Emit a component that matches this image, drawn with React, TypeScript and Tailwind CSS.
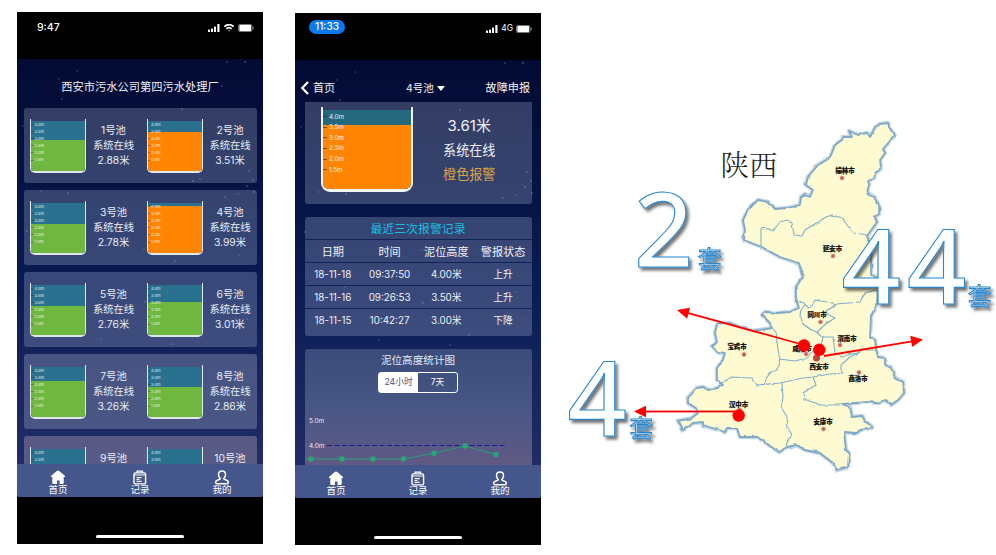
import React from "react";

const FONT = "font-['Inter','Noto_Sans_CJK_SC',sans-serif]";

/* ---------- status bar ---------- */

function Signal() {
  return (
    <svg width="12" height="8" viewBox="0 0 12 8" fill="#fff">
      <rect x="0" y="5.5" width="2" height="2.5" rx=".5" />
      <rect x="3" y="4.5" width="2" height="3.5" rx=".5" />
      <rect x="6" y="2.5" width="2" height="5.5" rx=".5" />
      <rect x="9.3" y="0" width="2.2" height="8" rx=".5" />
    </svg>
  );
}

function Wifi() {
  return (
    <svg width="10" height="8" viewBox="0 0 10 8" fill="none" stroke="#fff" strokeWidth="1.7">
      <path d="M.5 2.8C3-.2 7-.2 9.5 2.8" />
      <path d="M2.4 4.9C4 3.2 6 3.2 7.6 4.9" />
      <path d="M4 6.2h2L5 7.4z" fill="#fff" stroke="none" />
    </svg>
  );
}

function Battery() {
  return (
    <svg width="16" height="8" viewBox="0 0 16 8">
      <rect x=".4" y=".4" width="13.6" height="7.2" rx="1.8" fill="none" stroke="#aaa" strokeWidth=".8" />
      <rect x="1.300" y="1.100" width="11.800" height="5.800" rx="1" fill="#fff" />
      <rect x="14.700" y="2.600" width="1" height="2.800" rx=".5" fill="#888" />
    </svg>
  );
}

/* ---------- tab bar ---------- */

function HomeIcon() {
  return (
    <svg width="16" height="15" viewBox="0 0 16 15" fill="#fff">
      <path d="M8 .6c.5 0 .9.2 1.300.5l5.500 4.600c.6.6.3 1.400-.5 1.400h-.6v5.600c0 .8-.5 1.400-1.400 1.400H9.600V10.500H7v3.600H3.700c-.9 0-1.400-.6-1.400-1.400V7.100h-.6c-.8 0-1.100-.8-.5-1.400l5.500-4.600C7.100.8 7.500.6 8 .6z" />
    </svg>
  );
}

function RecordIcon() {
  return (
    <svg width="16" height="15" viewBox="0 0 16 15" fill="none" stroke="#fff" strokeWidth="1.400">
      <rect x="2" y="2.900" width="11.600" height="11" rx="1.500" />
      <path d="M2 5h11.600M5 2.800V1.200h5.500v1.600M4.600 7.700h5M4.600 9.500h2.800M4.600 11.300h5" strokeWidth="1.200" />
    </svg>
  );
}

function UserIcon() {
  return (
    <svg width="16" height="15" viewBox="0 0 16 15" fill="none" stroke="#fff" strokeWidth="1.500">
      <path d="M8 1C5.700 1 4.500 2.600 4.500 4.600c0 1.900.7 3 1.800 4-.3 1.300-4.600 1-4.600 3.600 0 1 .6 1.600 1.600 1.600h9.400c1 0 1.600-.6 1.600-1.600 0-2.600-4.300-2.300-4.600-3.600 1.100-1 1.800-2.100 1.800-4C11.500 2.600 10.300 1 8 1z" />
    </svg>
  );
}

const TABS = [
  { label: "首页", Icon: HomeIcon },
  { label: "记录", Icon: RecordIcon },
  { label: "我的", Icon: UserIcon },
];

function TabBar() {
  return (
    <div className="relative flex h-[33px] shrink-0 rounded-b-[3px] bg-[#45568c]">
      {TABS.map(({ label, Icon }) => (
        <div key={label} className="flex flex-1 flex-col items-center pt-[6px] text-[9.500px] leading-[10px] text-white">
          <Icon />
          <span>{label}</span>
        </div>
      ))}
    </div>
  );
}

/* ---------- phone shell ---------- */

const STARS: [number, number, number][] = [
  [210, 3, 0.4], [228, 3, 0.5], [42, 20, 0.3], [45, 40, 0.4], [205, 27, 0.4], [165, 50, 0.4],
  [60, 12, 0.3], [6, 67, 0.3], [176, 122, 0.5], [183, 120, 0.4], [232, 112, 0.4], [236, 121, 0.4],
  [221, 135, 0.3], [24, 132, 0.3], [51, 134, 0.4], [208, 138, 0.4], [237, 133, 0.5], [230, 127, 0.5],
  [10, 172, 0.4], [158, 202, 0.4], [127, 190, 0.3], [222, 196, 0.3], [50, 227, 0.3], [221, 232, 0.3], [128, 243, 0.4],
  [84, 280, 0.3], [174, 275, 0.4], [155, 285, 0.3], [22, 265, 0.3], [180, 297, 0.3], [230, 260, 0.3],
];

function Phone({ status, className, children }: { status: React.ReactNode; className: string; children: React.ReactNode }) {
  return (
    <div className={"flex h-[532px] w-[246px] shrink-0 flex-col bg-black " + className}>
      <div className="h-[47px] shrink-0">{status}</div>
      <div className="relative flex h-[438px] shrink-0 flex-col overflow-hidden bg-linear-to-b from-[#030b33] via-[#091b53] via-50% to-[#24306a]">
        <svg className="absolute inset-0" width="246" height="438" viewBox="0 0 246 438">
          {STARS.map(([x, y, o], i) => (
            <ellipse key={i} cx={x} cy={y} rx=".7" ry="1" fill="#9fb4e8" opacity={o} />
          ))}
        </svg>
        <div className="relative min-h-0 flex-1 overflow-hidden">{children}</div>
        <TabBar />
      </div>
      <div className="flex flex-1 items-end justify-center pb-[6px]">
        <div className="h-[3px] w-[88px] rounded-full bg-white" />
      </div>
    </div>
  );
}

/* ---------- tanks ---------- */

const MARKS = ["4.0m", "3.5m", "3.0m", "2.5m", "2.0m", "1.5m"];

function SmallTank({ level, alarm, marks }: { level: number; alarm?: boolean; marks: string[] }) {
  return (
    <div className="flex h-[54px] w-[56px] flex-col rounded-b-[5px] border-x-[1.500px] border-b-2 border-[#dfe8ea] pt-[2px]">
      <div className="relative flex-1 rounded-b-[3px] bg-[#29718f]">
        <div
          className={"absolute inset-x-0 bottom-0 rounded-b-[3px] " + (alarm ? "bg-[#ff8503]" : "bg-[#70b740]")}
          style={{ top: level - 13 }}
        />
        <div className="relative flex flex-col">
          {marks.map((m) => (
            <div key={m} className="flex h-[7.100px] items-center text-[4px] leading-none text-white/80">
              <i className="mr-[1.500px] h-px w-[2px] bg-black/30" />
              <span>{m}</span>
            </div>
          ))}
        </div>
      </div>
    </div>
  );
}

type Pool = { n: number; v?: string; level: number; alarm?: boolean };

const POOLS: Pool[][] = [
  [{ n: 1, v: "2.88", level: 32.300 }, { n: 2, v: "3.51", level: 24, alarm: true }],
  [{ n: 3, v: "2.78", level: 34 }, { n: 4, v: "3.99", level: 16, alarm: true }],
  [{ n: 5, v: "2.76", level: 34.300 }, { n: 6, v: "3.01", level: 30.300 }],
  [{ n: 7, v: "3.26", level: 27 }, { n: 8, v: "2.86", level: 33.300 }],
  [{ n: 9, level: 32 }, { n: 10, level: 32 }],
];

function PoolCell({ pool }: { pool: Pool }) {
  return (
    <div className="flex w-[116.500px] shrink-0">
      <SmallTank level={pool.level} alarm={pool.alarm} marks={pool.v ? MARKS : MARKS.slice(0, 2)} />
      <div className="w-[55px] pt-[4px] text-center text-[10.300px] leading-[15px] whitespace-nowrap text-[#e9edf6]">
        <p>{pool.n}号池</p>
        {pool.v && (
          <>
            <p>系统在线</p>
            <p>{pool.v}米</p>
          </>
        )}
      </div>
    </div>
  );
}

function ListScreen() {
  return (
    <Phone
      className="mt-[12px]"
      status={
        <div className="flex h-[31px] items-center pr-[9px] pl-[20px] text-[10.500px] font-medium text-white">
          <span className="flex-1">9:47</span>
          <div className="flex items-center gap-[4px]">
            <Signal />
            <Wifi />
            <Battery />
          </div>
        </div>
      }
    >
      <h1 className="flex h-[49px] items-center justify-center pt-[8px] text-[11.250px] text-[#eef1f8]">西安市污水公司第四污水处理厂</h1>
      <div className="flex flex-col gap-[7px] px-[6.500px]">
        {POOLS.map((row) => (
          <div
            key={row[0].n}
            className={
              "flex h-[75px] shrink-0 rounded-[3px] pt-[11px] pl-[6.500px] " +
              (row[0].n === 9 ? "bg-[#6c6b90]/75" : row[0].n === 7 ? "bg-[#5a668f]/75" : "bg-[#e0e8ff]/22")
            }
          >
            <PoolCell pool={row[0]} />
            <PoolCell pool={row[1]} />
          </div>
        ))}
      </div>
    </Phone>
  );
}

/* ---------- detail screen ---------- */

const RECORDS = [
  ["18-11-18", "09:37:50", "4.00米", "上升"],
  ["18-11-16", "09:26:53", "3.50米", "上升"],
  ["18-11-15", "10:42:27", "3.00米", "下降"],
];

const POINTS: [number, number][] = [
  [6, 110], [37, 110], [68, 110], [98.500, 110], [129, 104.300], [160, 97], [191, 105.600],
];

function BigTank() {
  return (
    <div className="mt-[5px] ml-[16.500px] flex h-[85px] w-[92px] flex-col rounded-b-[9px] border-x-2 border-b-[3px] border-[#f2f5f6] pt-[3px]">
      <div className="relative flex-1 rounded-b-[6px] bg-[#25697f]">
        <div className="absolute inset-x-0 top-[15px] bottom-0 rounded-b-[6px] bg-[#ff8503]" />
        <div className="relative pt-[1.500px]">
          {MARKS.map((m) => (
            <div key={m} className="flex h-[10.600px] items-center text-[6.300px] leading-none text-white/90">
              <i className="mr-[2px] h-px w-[4px] bg-black/45" />
              <span>{m}</span>
            </div>
          ))}
        </div>
      </div>
    </div>
  );
}

function DetailScreen() {
  return (
    <Phone
      className="mt-[13px] ml-[32px]"
      status={
        <div className="flex h-[31px] items-center pr-[9px] pl-[14px] text-[10px] font-medium text-white">
          <div className="flex flex-1">
            <span className="mb-[4px] flex h-[14px] w-[36px] items-center justify-center rounded-full bg-[#0a78ee]">11:33</span>
          </div>
          <div className="flex items-center gap-[3px] text-[8.500px] font-normal">
            <Signal />
            <span>4G</span>
            <Battery />
          </div>
        </div>
      }
    >
      <div className="flex h-[42px] items-center pt-[15px] pr-[11px] pl-[5px] text-[11.100px] text-[#f3f5fa]">
        <div className="flex w-[106px] items-center gap-[3px]">
          <svg width="10" height="14" viewBox="0 0 10 14" fill="none" stroke="#fff" strokeWidth="2.200">
            <path d="M8 1L2.200 7 8 13" />
          </svg>
          首页
        </div>
        <div className="flex items-center gap-[3px] text-[10.500px]">
          4号池
          <svg width="8" height="5" viewBox="0 0 8 5" fill="#fff">
            <path d="M0 0h8L4 5z" />
          </svg>
        </div>
        <div className="flex-1 text-right">故障申报</div>
      </div>
      <div className="flex flex-col gap-[13px] px-[9.500px]">
        <div className="flex h-[102px] shrink-0 rounded-b-[3px] bg-[#e0e8ff]/22">
          <BigTank />
          <div className="flex flex-1 flex-col items-center pt-[12px] pr-[6px] text-[13.100px] leading-[24px] text-[#eef1f8]">
            <p className="text-[15px]">3.61米</p>
            <p>系统在线</p>
            <p className="text-[#dda244]">橙色报警</p>
          </div>
        </div>
        <div className="flex h-[119px] shrink-0 flex-col divide-y divide-[#0e2358] rounded-[3px] bg-[#e0e8ff]/22 text-center text-[#eef1f8]">
          <h2 className="h-[23px] text-[11.900px] leading-[23px] text-[#18bfe0]">最近三次报警记录</h2>
          <div className="grid h-[23px] grid-cols-4 text-[11.200px] leading-[24px]">
            <span>日期</span>
            <span>时间</span>
            <span>泥位高度</span>
            <span>警报状态</span>
          </div>
          {RECORDS.map((r) => (
            <div key={r[0]} className="grid h-[23px] grid-cols-4 text-[9.800px] leading-[24px]">
              {r.map((c) => (
                <span key={c}>{c}</span>
              ))}
            </div>
          ))}
        </div>
        <div className="h-[116px] shrink-0 rounded-t-[3px] bg-linear-to-b from-[#3a4c7b] via-[#475684] to-[#605a85]">
          <div className="flex h-[44px] flex-col items-center pt-[4px]">
            <h2 className="text-[10.600px] leading-[15px] text-[#e3e9f4]">泥位高度统计图</h2>
            <div className="mt-[4px] flex h-[21px] w-[80px] shrink-0 rounded-[3px] border border-white text-[8.700px] leading-[19px]">
              <span className="w-1/2 bg-white text-center text-[#45557c]">24小时</span>
              <span className="w-1/2 text-center text-white">7天</span>
            </div>
          </div>
          <svg width="227" height="72" viewBox="0 44 227 72" className={FONT}>
            <text x="4" y="74" fontSize="6.500" fill="#e6eaf4">5.0m</text>
            <text x="4" y="99" fontSize="6.500" fill="#e6eaf4">4.0m</text>
            <path d="M22 96.500H202" stroke="#17179c" strokeWidth="1" strokeDasharray="5 2.500" />
            <polyline points={"0,110 " + POINTS.map((p) => p.join(",")).join(" ")} fill="none" stroke="#2a9c78" />
            {POINTS.map(([x, y]) => (
              <circle key={x} cx={x} cy={y} r="2.700" fill="#2ba777" />
            ))}
          </svg>
        </div>
      </div>
    </Phone>
  );
}

/* ---------- province map ---------- */

const OUTLINE =
  "M888 123 L889 127 894 135 889 142 883 149 885 153 880 160 881 169 875 173 874 178 868 180 869 185 867 193 873 196 879 205 879 214 874 217 877 222 867 236 870 245 871 257 871 275 878 278 877 303 871 315 870 338 875 340 876 349 878 357 885 358 885 365 891 368 895 378 903 382 904 393 898 400 891 405 885 400 877 403 868 402 842 404 850 407 852 417 862 416 865 421 872 427 867 429 860 430 857 433 844 432 845 442 846 450 849 453 848 467 837 470 833 463 820 453 805 450 797 445 787 447 779 452 773 448 762 440 757 437 740 437 737 428 727 428 725 432 703 425 703 422 693 423 683 430 678 421 692 418 698 413 696 408 688 403 688 398 697 388 703 387 708 390 718 388 723 385 717 380 717 368 723 360 725 353 718 352 712 347 717 342 715 333 717 325 727 322 742 328 753 331 773 328 770 323 762 315 765 312 778 313 790 312 799 308 796 297 796 287 803 277 799 263 780 257 762 247 744 240 745 230 743 220 748 210 758 200 768 202 775 209 788 208 800 205 801 197 805 194 810 197 813 190 806 185 808 177 818 165 830 158 835 145 842 140 843 137 852 137 849 131 858 135 867 133 870 137 875 128 880 124Z";

const BORDERS = [
  "M761 247V229Q767 227 773 231L780 222 787 220 792 223 794 235 802 236 805 230 826 217 832 215 842 218 853 233 867 235",
  "M799 302Q804 299 808 308 812 306 815 300L827 302 837 304 860 302 865 293 877 290",
  "M807 304Q800 308 800 316 803 328 817 332L827 323 835 318 825 313 836 304",
  "M817 332L823 337 833 337 835 353 842 356 858 353 862 350H876",
  "M823 337Q822 348 815 349L807 358 795 361 779 359",
  "M770 323L776 333 778 350 780 359 777 370Q766 373 765 383",
  "M718 385L732 377 752 378 757 385 780 383 803 378 813 377 830 374 843 373 841 365 850 357 860 352",
  "M813 377L816 385 803 393 804 399 812 402 820 405H846",
  "M782 383L783 397 781 407 787 417 788 429 792 434 786 446",
];

const CITIES: [string, number, number, number, number][] = [
  ["榆林市", 845, 173, 842, 178],
  ["延安市", 832.500, 251, 833, 256],
  ["同川市", 817, 317, 820.500, 322],
  ["渭南市", 847, 340.500, 840, 345],
  ["咸阳市", 802, 350.500, 806, 354],
  ["西安市", 819, 368.500, 816.500, 358],
  ["宝鸡市", 737, 349, 744, 354.500],
  ["商洛市", 858, 381, 859, 372.500],
  ["汉中市", 738.500, 406.500, 740, 410],
  ["安康市", 823, 424, 823.500, 429],
];

function Arrow({ x1, y1, x2, y2 }: { x1: number; y1: number; x2: number; y2: number }) {
  const a = (Math.atan2(y2 - y1, x2 - x1) * 180) / Math.PI;
  const len = Math.hypot(x2 - x1, y2 - y1);
  return (
    <g transform={`translate(${x1} ${y1}) rotate(${a})`} fill="#f00">
      <rect x="0" y="-.9" width={len - 8} height="1.800" />
      <path d={`M${len} 0l-12-5.700v11.400z`} />
    </g>
  );
}

function Count({ value, x, y, w, ux, uy }: { value: string; x: number; y: number; w: number; ux: number; uy: number }) {
  return (
    <g stroke="#2b87cf" filter="url(#lift)">
      <text x={x} y={y} fontSize="104" textLength={w} fill="#fff" strokeWidth="1.100" fontWeight="500" fontFamily="'Noto Sans','DejaVu Sans',sans-serif">
        {value}
      </text>
      <text x={ux} y={uy} fontSize="23.500" fill="#fff" strokeWidth="1.150" fontWeight="400" fontFamily="'Noto Sans CJK SC',sans-serif">
        套
      </text>
    </g>
  );
}

function ProvinceMap() {
  return (
    <svg className="ml-[14px] shrink-0" width="441" height="555" viewBox="555 0 441 555">
      <defs>
        <filter id="rough" x="-5%" y="-5%" width="110%" height="110%">
          <feTurbulence type="fractalNoise" baseFrequency=".13" numOctaves="1" seed="4" result="n" />
          <feDisplacementMap in="SourceGraphic" in2="n" scale="3" xChannelSelector="R" yChannelSelector="G" />
          <feGaussianBlur stdDeviation=".3" />
        </filter>
        <filter id="lift" x="-20%" y="-20%" width="150%" height="150%">
          <feDropShadow dx="2.500" dy="3" stdDeviation="1.800" floodColor="#000" floodOpacity=".55" />
        </filter>
      </defs>
      <g filter="url(#rough)" strokeLinejoin="round" fill="none">
        <path d={OUTLINE} stroke="#b9cfe0" strokeWidth="4.500" opacity=".8" />
        <path d={OUTLINE} fill="#fefbd2" stroke="#7fa9c4" strokeWidth="1.800" />
        {BORDERS.map((d) => (
          <path key={d} d={d} stroke="#7fb0c8" strokeWidth="1.100" />
        ))}
      </g>
      {CITIES.map(([name, x, y, cx, cy]) => (
        <g key={name}>
          <circle cx={cx} cy={cy} r="2" fill="#c9564a" stroke="#d9a08e" strokeWidth="1" />
          <text x={x} y={y} fontSize="6.400" fontWeight="900" textAnchor="middle" fill="#111" stroke="#111" strokeWidth=".2" fontFamily="'Noto Sans CJK SC',sans-serif">
            {name}
          </text>
        </g>
      ))}
      <circle cx="816.500" cy="358" r="3.500" fill="#c8403a" />
      <text x="720.500" y="175.500" fontSize="28.500" fontWeight="300" fill="#1a1a1a" fontFamily="'Noto Serif CJK SC','Noto Sans CJK SC',serif">
        陕西
      </text>
      <Arrow x1={804} y1={345} x2={677} y2={310} />
      <Arrow x1={824} y1={356} x2={923} y2={339.500} />
      <Arrow x1={738} y1={411.500} x2={634} y2={411.500} />
      <circle cx="804" cy="345.500" r="6.200" fill="#f00" />
      <circle cx="819.300" cy="349.800" r="6.200" fill="#f00" />
      <circle cx="738.700" cy="415.500" r="6.200" fill="#f00" />
      <Count value="2" x={634} y={266.500} w={62} ux={698} uy={268} />
      <Count value="44" x={841.500} y={303.500} w={125} ux={968} uy={305} />
      <Count value="4" x={567.500} y={435.500} w={60} ux={629.500} uy={437} />
    </svg>
  );
}

export default function App() {
  return (
    <div className={"flex h-[555px] w-[996px] items-start overflow-hidden bg-white pl-[17px] " + FONT}>
      <ListScreen />
      <DetailScreen />
      <ProvinceMap />
    </div>
  );
}
